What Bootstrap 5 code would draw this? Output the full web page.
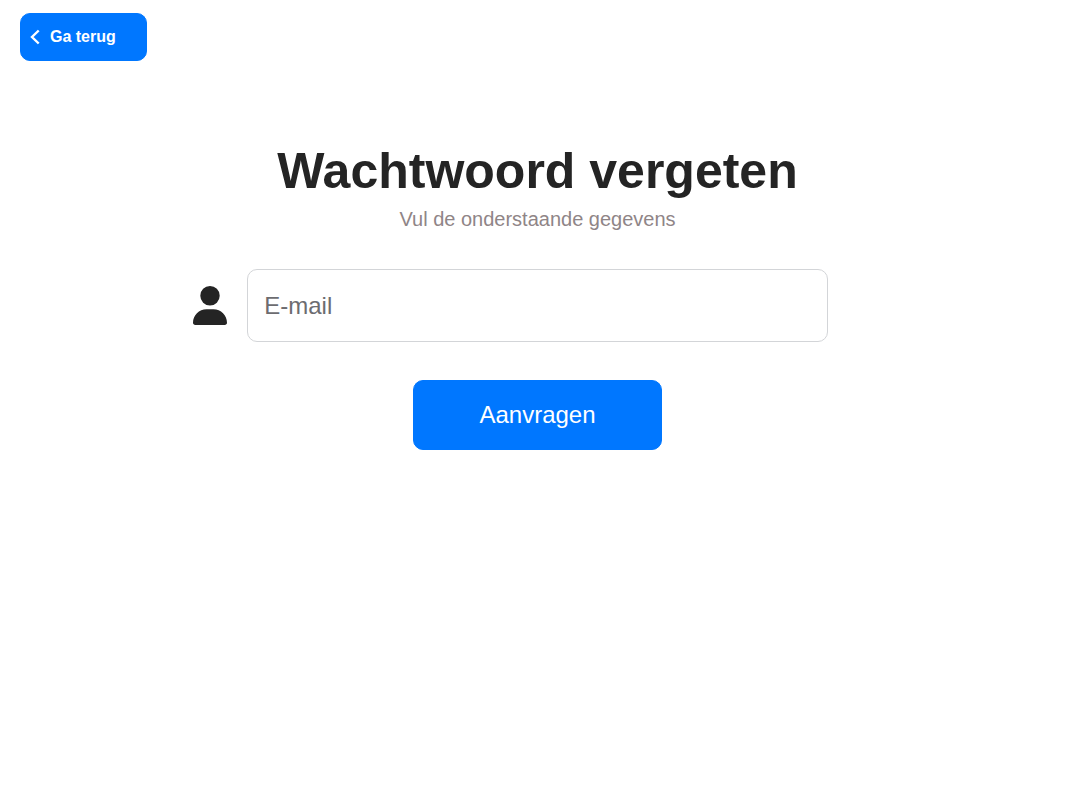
<!DOCTYPE html>
<html lang="nl">
<head>
<meta charset="utf-8">
<meta name="viewport" content="width=device-width, initial-scale=1">
<title>Wachtwoord vergeten</title>
<link href="https://cdn.jsdelivr.net/npm/bootstrap@5.3.0/dist/css/bootstrap.min.css" rel="stylesheet">
<style>
  body { font-family: "Liberation Sans", Arial, sans-serif; color: #242424; background: #fff; }
  .btn-brand { --bs-btn-bg: #0077ff; --bs-btn-color: #fff; --bs-btn-border-color: #0077ff;
    --bs-btn-hover-bg: #0062d6; --bs-btn-hover-color: #fff; --bs-btn-hover-border-color: #0062d6;
    --bs-btn-active-bg: #0056bd; --bs-btn-active-color: #fff;
    --bs-btn-border-radius: 10px; }
  .page-top { padding: 13px 20px 0; }
  .back-btn { padding: 11px 30px 11px 9px; gap: 10px; font-size: 16px; line-height: 24px; }
  .reset-form { padding: 80px 3px 0 0; }
  .reset-title { font-size: 50px; line-height: 60px; }
  .reset-sub { margin-top: 3px; font-size: 20px; line-height: 30px; color: #8f8587; }
  .reset-field { display: grid; grid-template-columns: 1fr 54% 1fr; column-gap: 20px; margin-top: 35px; }
  .email-box { height: 73px; padding: 0 16px; font-size: 24px; border: 1px solid #d3d5d8; border-radius: 10px; }
  .email-box::placeholder { color: #6c6c70; }
  .send-btn { margin-top: 38px; padding: 16px 65px; font-size: 24px; line-height: 36px; }
</style>
</head>
<body>
<header class="page-top">
  <button type="button" class="btn btn-brand back-btn d-inline-flex align-items-center fw-bold">
    <svg width="10" height="16" viewBox="0 0 10 16" fill="none" stroke="currentColor" stroke-width="2.400" aria-hidden="true"><path d="M8.700 1.500 2 8l6.700 6.500"/></svg>
    Ga terug
  </button>
</header>
<main>
  <form class="reset-form d-flex flex-column align-items-center">
    <h1 class="reset-title fw-bold text-center mb-0">Wachtwoord vergeten</h1>
    <p class="reset-sub text-center mb-0">Vul de onderstaande gegevens</p>
    <div class="reset-field w-100 align-items-center">
      <label for="email" class="d-flex justify-content-end" aria-label="E-mail">
        <svg width="34" height="39" viewBox="0 0 448 512" preserveAspectRatio="none" fill="currentColor" aria-hidden="true"><path d="M224 256A128 128 0 1 0 224 0a128 128 0 1 0 0 256zm-45.700 48C79.800 304 0 383.800 0 482.300C0 498.700 13.300 512 29.700 512H418.300c16.400 0 29.700-13.300 29.700-29.700C448 383.800 368.200 304 269.700 304H178.300z"/></svg>
      </label>
      <input type="email" id="email" class="form-control email-box" placeholder="E-mail">
    </div>
    <button type="submit" class="btn btn-brand send-btn">Aanvragen</button>
  </form>
</main>
<script src="https://cdn.jsdelivr.net/npm/bootstrap@5.3.0/dist/js/bootstrap.bundle.min.js"></script>
</body>
</html>
